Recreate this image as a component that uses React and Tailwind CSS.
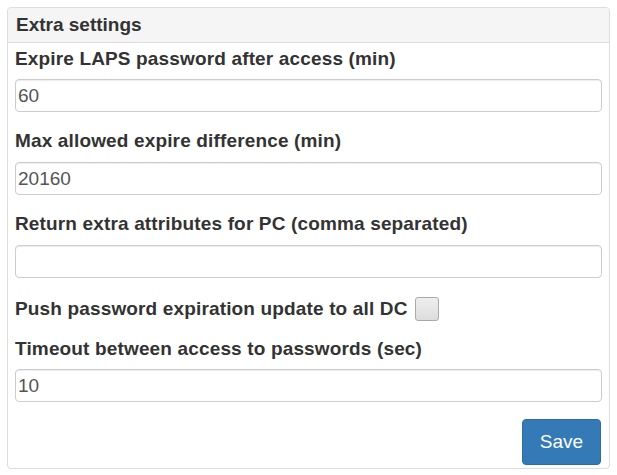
export default function App() {
  const font = { fontFamily: '"Liberation Sans", Arial, sans-serif' };
  const Label = ({ children, className = "" }) => (
    <div className={"h-[24px] leading-[24px] text-[19px] font-bold tracking-[0.15px] text-[#333] whitespace-nowrap " + className}>{children}</div>
  );
  const Input = ({ value, className = "" }) => (
    <div className={"h-[33px] w-full rounded-[4px] border border-[#ccc] bg-white pl-[2px] leading-[31px] text-[19px] text-[#555] shadow-[inset_0_1px_1px_rgba(0,0,0,0.075)] " + className}>{value}</div>
  );
  return (
    <div className="w-[617px] h-[475px] bg-white pt-[7px] pl-[7px]" style={font}>
      <div className="w-[603px] h-[462px] rounded-[4px] border border-[#ddd] flex flex-col overflow-hidden">
        <div className="h-[35px] bg-[#f5f5f5] border-b border-[#ddd] px-[8px] leading-[33px] text-[19px] font-bold text-[#333]">
          Extra settings
        </div>
        <div className="px-[7px] pt-[4px] flex flex-col">
          <Label>Expire LAPS password after access (min)</Label>
          <Input value="60" className="mt-[8px]" />
          <Label className="mt-[17px]">Max allowed expire difference (min)</Label>
          <Input value="20160" className="mt-[9px]" />
          <Label className="mt-[17px]">Return extra attributes for PC (comma separated)</Label>
          <Input value="" className="mt-[9px]" />
          <div className="mt-[19px] flex items-center h-[24px]">
            <Label>Push password expiration update to all DC</Label>
            <div className="ml-[7px] w-[24px] h-[24px] rounded-[3px] border border-[#aaa] bg-[linear-gradient(#eee,#ddd)]" />
          </div>
          <Label className="mt-[16px]">Timeout between access to passwords (sec)</Label>
          <Input value="10" className="mt-[8px]" />
          <div className="mt-[17px] flex justify-end pr-[1px]">
            <button className="w-[79px] h-[46px] rounded-[4px] border border-[#2e6da4] bg-[#337ab7] text-white text-[19px]">Save</button>
          </div>
        </div>
      </div>
    </div>
  );
}
